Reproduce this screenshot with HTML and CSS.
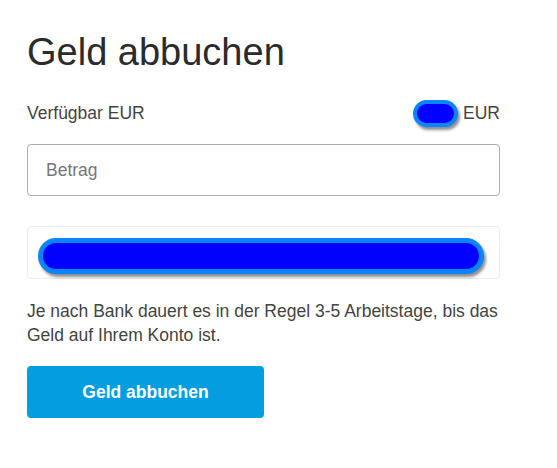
FILE: index.html
```html
<!DOCTYPE html>
<html lang="de">
<head>
<meta charset="utf-8">
<link rel="stylesheet" href="styles.css">
</head>
<body>
<main class="panel">
  <h1 class="title">Geld abbuchen</h1>
  <div class="avail">
    <span>Verfügbar EUR</span>
    <span class="avail-right"><span class="blot blot-small"></span>EUR</span>
  </div>
  <div class="input">Betrag</div>
  <div class="select"><span class="blot blot-wide"></span></div>
  <p class="note">Je nach Bank dauert es in der Regel 3-5 Arbeitstage, bis das Geld auf Ihrem Konto ist.</p>
  <button class="btn">Geld abbuchen</button>
</main>
</body>
</html>
```

FILE: styles.css
```css
html, body {
  margin: 0;
  padding: 0;
  background: #fff;
}
body {
  font-family: "Liberation Sans", Arial, sans-serif;
  color: #333;
}
.panel {
  width: 473px;
  padding: 0 0 0 27px;
  display: flex;
  flex-direction: column;
}
.title {
  margin: 29px 0 0 0;
  font-size: 38px;
  font-weight: 400;
  line-height: 46px;
  color: #2b2b2b;
}
.avail {
  margin-top: 24px;
  display: flex;
  justify-content: space-between;
  align-items: center;
  font-size: 17.5px;
  height: 28px;
  color: #444;
}
.avail-right {
  display: flex;
  align-items: center;
  gap: 5px;
}
.blot {
  display: block;
  background: #0000ff;
  border: 4px solid #0a84ff;
  border-radius: 999px;
  box-shadow: 2px 3px 3px rgba(0,0,0,0.45);
  box-sizing: border-box;
}
.blot-small {
  width: 45px;
  height: 27px;
}
.input {
  margin-top: 17px;
  height: 52px;
  box-sizing: border-box;
  border: 1px solid #a9abae;
  border-radius: 4px;
  padding: 0 18px;
  display: flex;
  align-items: center;
  font-size: 17.5px;
  color: #777;
}
.select {
  margin-top: 30px;
  height: 53px;
  box-sizing: border-box;
  border: 1px solid #ececec;
  border-radius: 4px;
  padding: 11px 0 0 10px;
}
.blot-wide {
  width: 446px;
  height: 36px;
  border-width: 5px;
}
.note {
  margin: 20px 0 0 0;
  font-size: 17.5px;
  line-height: 24px;
  color: #444;
}
.btn {
  margin-top: 19px;
  width: 237px;
  height: 52px;
  border: none;
  border-radius: 4px;
  background: #049ddf;
  color: #fff;
  font-family: "Liberation Sans", Arial, sans-serif;
  font-weight: 700;
  font-size: 17.5px;
  padding: 0;
}
```
